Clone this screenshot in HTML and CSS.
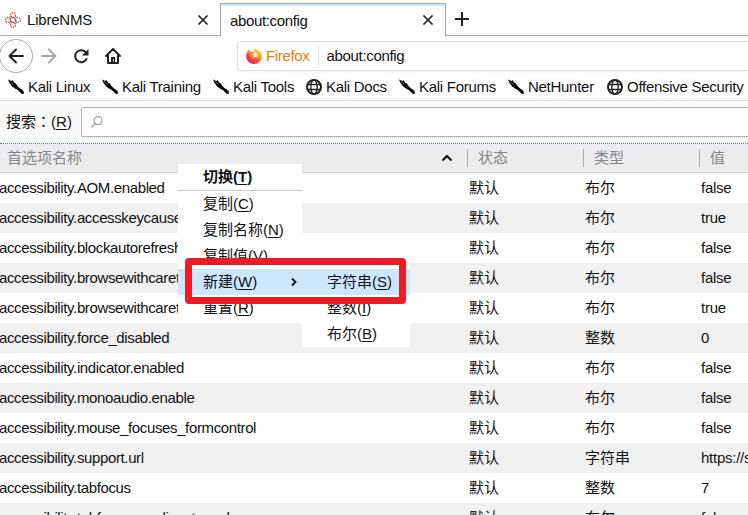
FILE: index.html
```html
<!DOCTYPE html>
<html lang="zh-CN">
<head>
<meta charset="utf-8">
<title>about:config</title>
<link rel="stylesheet" href="styles.css">
</head>
<body>
<svg width="0" height="0" class="defs">
  <symbol id="close" viewBox="0 0 12 12"><path d="M1.500 1.500l9 9M10.500 1.500l-9 9" fill="none" stroke="#222" stroke-width="1.700"/></symbol>
  <symbol id="kali" viewBox="0 0 16 16"><path d="M0 .5L3.500 2l1-.9L6 3.500l1.800 1 1.700 2.500 2.500 2.600 1.500.7 2.500 2.500-.4.800.3 1.300-1.100.2-1.500-.6-2.200-2.200-1.200-1.200-3-1.500L4.200 7.500 1.500 4z" fill="#000"/><path d="M1.600 1.900l4 3.500" stroke="#fff" stroke-width=".4"/></symbol>
  <symbol id="globe" viewBox="0 0 16 16"><g fill="none" stroke="#222225"><circle cx="8" cy="8" r="7" stroke-width="2"/><ellipse cx="8" cy="8" rx="3.200" ry="7" stroke-width="1.300"/><path d="M1.500 5.500h13M1.500 10.500h13" stroke-width="1.300"/></g></symbol>
</svg>
<header class="tabs">
  <div class="tab">
    <svg class="i16" viewBox="0 0 16 16"><g fill="none" stroke-width="1.200" stroke-dasharray="1.500 .7"><circle cx="8" cy="3" r="2.400" stroke="#e33"/><circle cx="3" cy="8" r="2.400" stroke="#e33"/><circle cx="8" cy="13" r="2.400" stroke="#e33"/><circle cx="13" cy="8" r="2.400" stroke="#777"/><circle cx="8" cy="8" r="2.400" stroke="#666"/><path d="M4.500 5.500l1-1M11.500 5.500l-1-1M4.500 10.500l1 1M11.500 10.500l-1 1" stroke="#b66"/></g></svg>
    <span class="title">LibreNMS</span><svg class="close"><use href="#close"/></svg>
  </div>
  <div class="tab active"><span class="title">about:config</span><svg class="close"><use href="#close"/></svg></div>
  <div class="newtab"><svg width="14" height="14" viewBox="0 0 14 14"><path d="M7 0v14M0 7h14" stroke="#222" stroke-width="2"/></svg></div>
</header>
<nav class="nav">
  <div class="back"><svg class="i16" viewBox="0 0 16 16"><path d="M15 8H1.500M8 1.500L1.500 8 8 14.500" fill="none" stroke="#222" stroke-width="2" stroke-linecap="round" stroke-linejoin="round"/></svg></div>
  <svg class="i16 fwd" viewBox="0 0 16 16"><path d="M1 8h13.500M8 1.500L14.500 8 8 14.500" fill="none" stroke="#aaa" stroke-width="2" stroke-linecap="round" stroke-linejoin="round"/></svg>
  <svg class="i16 reload" viewBox="0 0 16 16"><path d="M13 4.500A6 6 0 1 0 13.500 11" fill="none" stroke="#222" stroke-width="2" stroke-linecap="round"/><path d="M15.500 1v6.500H9z" fill="#222"/></svg>
  <svg class="i16 home" viewBox="0 0 16 16"><path d="M1 8l7-7 7 7M3 7.500V15h10V7.500" fill="none" stroke="#222" stroke-width="2" stroke-linecap="round" stroke-linejoin="round"/><path d="M6 15V9h4v6z" fill="#222"/><path d="M8.500 11.500v2" stroke="#fff"/></svg>
  <div class="url">
    <svg class="i16" viewBox="0 0 16 16"><defs><linearGradient id="fx" x1=".85" y1="0" x2=".2" y2="1"><stop stop-color="#ffdf35"/><stop offset=".4" stop-color="#ff9a20"/><stop offset=".7" stop-color="#ff3b3f"/><stop offset="1" stop-color="#e5168b"/></linearGradient></defs><path d="M2.500 1.500l1.800 2L7 4 8.500 3 9 .2c2 .8 3 2 3.300 3.300l.9-.9C15 4.500 16 6.500 15.900 8.500A7.900 7.500 0 0 1 .1 8.500C0 6 1 4 2.500 1.500z" fill="url(#fx)"/><path d="M4.500 6.500L7 6l1.500-1.200V3.500c2.300.8 3.500 2.800 3 5-.5 2-3 3-5 2.200C5 10 4.300 8.500 4.500 6.500z" fill="#fff2e8"/><path d="M4.800 7.300l3.200-.8c.2 1-.8 1.500-1.200 2 1 .8 2.800.8 4.200 0-.5 2.500-2.500 3-4.500 2.200S4.600 9 4.800 7.300z" fill="#ff7a2b"/></svg>
    <span class="brand">Firefox</span><span class="address">about:config</span>
  </div>
</nav>
<nav class="bookmarks">
  <a style="width:94px"><svg class="i16"><use href="#kali"/></svg>Kali Linux</a>
  <a style="width:111px"><svg class="i16"><use href="#kali"/></svg>Kali Training</a>
  <a style="width:93px"><svg class="i16"><use href="#kali"/></svg>Kali Tools</a>
  <a style="width:93px"><svg class="i16"><use href="#globe"/></svg>Kali Docs</a>
  <a style="width:109px"><svg class="i16"><use href="#kali"/></svg>Kali Forums</a>
  <a style="width:99px"><svg class="i16"><use href="#kali"/></svg>NetHunter</a>
  <a><svg class="i16"><use href="#globe"/></svg>Offensive Security</a>
</nav>
<section class="search"><label>搜索<span lang="zh-TW" class="colon">：</span>(<u>R</u>)</label>
  <div class="field"><svg width="12" height="12" viewBox="0 0 12 12"><circle cx="7" cy="4.700" r="4" fill="none" stroke="#999" stroke-width="1.200"/><path d="M4.200 7.700L.5 11.500" stroke="#999" stroke-width="1.200"/></svg></div>
</section>
<main>
  <div class="row head"><span>首选项名称<svg class="sort" width="12" height="8" viewBox="0 0 12 8"><path d="M1.500 6.500L6 2l4.500 4.500" fill="none" stroke="#111" stroke-width="2.200"/></svg></span><span>状态</span><span>类型</span><span>值</span></div>
  <div class="row"><span>accessibility.AOM.enabled</span><span>默认</span><span>布尔</span><span>false</span></div>
  <div class="row"><span>accessibility.accesskeycausesactivation</span><span>默认</span><span>布尔</span><span>true</span></div>
  <div class="row"><span>accessibility.blockautorefresh</span><span>默认</span><span>布尔</span><span>false</span></div>
  <div class="row"><span>accessibility.browsewithcaret</span><span>默认</span><span>布尔</span><span>false</span></div>
  <div class="row"><span>accessibility.browsewithcaret</span><span>默认</span><span>布尔</span><span>true</span></div>
  <div class="row"><span>accessibility.force_disabled</span><span>默认</span><span>整数</span><span>0</span></div>
  <div class="row"><span>accessibility.indicator.enabled</span><span>默认</span><span>布尔</span><span>false</span></div>
  <div class="row"><span>accessibility.monoaudio.enable</span><span>默认</span><span>布尔</span><span>false</span></div>
  <div class="row"><span>accessibility.mouse_focuses_formcontrol</span><span>默认</span><span>布尔</span><span>false</span></div>
  <div class="row"><span>accessibility.support.url</span><span>默认</span><span>字符串</span><span>https://s</span></div>
  <div class="row"><span>accessibility.tabfocus</span><span>默认</span><span>整数</span><span>7</span></div>
  <div class="row"><span>accessibility.tabfocus_applies_to_xul</span><span>默认</span><span>布尔</span><span>false</span></div>
</main>
<div class="menu">
  <div class="item default">切换(<u>T</u>)</div>
  <div class="item">复制(<u>C</u>)</div>
  <div class="item">复制名称(<u>N</u>)</div>
  <div class="item">复制值(<u>V</u>)</div>
  <div class="item hot">新建(<u>W</u>)<svg class="arrow" width="6" height="10" viewBox="0 0 6 10"><path d="M1 1.500L4.500 5 1 8.500" fill="none" stroke="#111" stroke-width="1.800"/></svg></div>
  <div class="item">重置(<u>R</u>)</div>
</div>
<div class="menu submenu">
  <div class="item hot">字符串(<u>S</u>)</div>
  <div class="item">整数(<u>I</u>)</div>
  <div class="item">布尔(<u>B</u>)</div>
</div>
<div class="marker"></div>
</body>
</html>
```
FILE: styles.css
```css
* { box-sizing: border-box; }
body { margin: 0; width: 748px; height: 515px; overflow: hidden; position: relative; background: #fff; color: #111; font: 15px/20px "Liberation Sans", "Noto Sans CJK SC", sans-serif; white-space: nowrap; }
.defs { position: absolute; }
svg { display: block; flex: none; }
u { text-underline-offset: 2px; text-decoration-thickness: 1px; }
.i16 { width: 16px; height: 16px; }
.tabs { display: flex; height: 36px; padding-top: 3px; }
.tab { display: flex; align-items: center; width: 220px; padding: 1px 11px 0 5px; border-bottom: 1px solid #b1b1b3; letter-spacing: -.2px; }
.tab .i16 { margin-right: 6px; }
.title { padding-top: 1px; }
.close { width: 12px; height: 12px; margin-left: auto; }
.tab.active { width: 226px; padding: 0 11px 0 9px; border: 1px solid #aaa; border-bottom: 0; box-shadow: inset 0 2px #cce7ff; letter-spacing: -.35px; }
.newtab { flex: 1; padding: 9px 0 0 9px; border-bottom: 1px solid #b1b1b3; }
.nav { display: flex; align-items: center; height: 39px; }
.back { display: flex; align-items: center; justify-content: center; width: 34px; height: 34px; margin: 1px 0 0 -1px; border: 1px solid #aaa; border-radius: 50%; }
.fwd { margin-left: 8px; }
.reload { margin-left: 16px; }
.home { margin-left: 16px; }
.url { display: flex; align-items: center; flex: 1; height: 30px; margin: 1px 0 0 116px; padding-left: 8px; border: 1px solid #e1e1e2; border-right: 0; border-radius: 4px 0 0 4px; box-shadow: 0 1px 3px #0000000d; letter-spacing: -.33px; }
.brand { margin-left: 4px; padding-right: 8px; border-right: 1px solid #ddd; color: #e77c0b; }
.address { margin-left: 8px; }
.bookmarks { display: flex; align-items: center; height: 26px; padding: 0 0 1px 8px; border-bottom: 1px solid #e0e0e1; letter-spacing: -.28px; }
.bookmarks a { display: flex; flex: none; gap: 4px; align-items: center; }
.search { display: flex; align-items: center; height: 42px; padding-left: 6px; background: #f9f9fa; }
.search label { width: 75px; }
.colon { font-family: "Noto Sans CJK TC", sans-serif; line-height: 1; }
.field { flex: 1; height: 30px; padding: 8px 9px; background: #fff; border: 1px solid #b1b1b3; border-right: 0; border-radius: 2px 0 0 2px; }
main { border-top: 1px dotted #0a84ff; }
.row { display: grid; grid-template-columns: 469px 116px 116px 47px; height: 30px; align-items: center; }
.row:nth-child(odd) { background: #f1f1f1; }
.row:not(.head) span:first-child { margin-left: -1px; letter-spacing: -.37px; }
.row:not(.head) span:last-child { letter-spacing: -.25px; }
.row.head { grid-template-columns: 467px 116px 116px 49px; height: 29px; background: #ececee; border-bottom: 1px solid #d4d4d6; color: #858587; }
.head span { display: flex; align-items: center; height: 18px; padding-left: 10px; border-left: 1px solid #aaa; }
.head span:first-child { padding-left: 7px; border: 0; }
.sort { margin: 0 14px 0 auto; }
.menu { position: absolute; left: 178px; top: 164px; width: 124px; height: 159px; background: #fff; }
.item { display: flex; align-items: center; height: 26px; padding-left: 25px; }
.item.default { height: 27px; font-weight: bold; border-bottom: 1px solid #ccc; }
.hot { background: #cce7ff; }
.arrow { margin: 0 5px 0 auto; }
.submenu { left: 302px; top: 265px; width: 108px; height: 82px; padding-top: 4px; }
.marker { position: absolute; left: 185px; top: 258px; width: 221px; height: 46px; border: 7px solid #ed1c24; border-radius: 4px; }
```
